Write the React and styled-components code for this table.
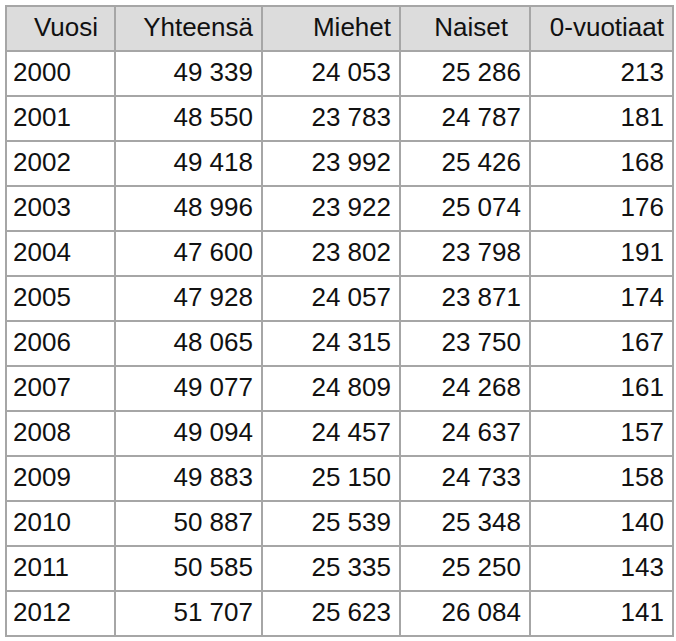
import React from "react";
import styled, { createGlobalStyle } from "styled-components";

const GlobalStyle = createGlobalStyle`
	body {
		margin: 0;
		background: #ffffff;
		font-family: "Liberation Sans", Arial, sans-serif;
	}
`;

const COLUMNS = "109px 147px 138px 130px 143px";

const Page = styled.div`
	padding: 5px 0 0 5px;
`;
const Table = styled.div`
	display: inline-flex;
	flex-direction: column;
	border-left: 2px solid #a6a6a6;
	border-top: 2px solid #a6a6a6;
`;
const Row = styled.div`
	display: grid;
	grid-template-columns: ${COLUMNS};
	background: ${(p) => (p.$head ? "#dcdcdc" : "#ffffff")};
`;
const Cell = styled.div`
	box-sizing: border-box;
	height: 45px;
	display: flex;
	align-items: center;
	justify-content: ${(p) => (p.$left ? "flex-start" : "flex-end")};
	padding: 0 ${(p) => p.$pr ?? 8}px 3px ${(p) => (p.$left ? 6 : 0)}px;
	border-right: 2px solid #a6a6a6;
	border-bottom: 2px solid #a6a6a6;
	font-size: 26px;
	color: #111111;
	white-space: nowrap;
`;

const headers = [
	{ label: "Vuosi", pr: 16 },
	{ label: "Yhteensä", pr: 8 },
	{ label: "Miehet", pr: 8 },
	{ label: "Naiset", pr: 21 },
	{ label: "0-vuotiaat", pr: 8 },
];

const rows = [
	["2000", "49 339", "24 053", "25 286", "213"],
	["2001", "48 550", "23 783", "24 787", "181"],
	["2002", "49 418", "23 992", "25 426", "168"],
	["2003", "48 996", "23 922", "25 074", "176"],
	["2004", "47 600", "23 802", "23 798", "191"],
	["2005", "47 928", "24 057", "23 871", "174"],
	["2006", "48 065", "24 315", "23 750", "167"],
	["2007", "49 077", "24 809", "24 268", "161"],
	["2008", "49 094", "24 457", "24 637", "157"],
	["2009", "49 883", "25 150", "24 733", "158"],
	["2010", "50 887", "25 539", "25 348", "140"],
	["2011", "50 585", "25 335", "25 250", "143"],
	["2012", "51 707", "25 623", "26 084", "141"],
];

const App = () => {
	return (
		<>
			<GlobalStyle />
			<Page>
				<Table>
					<Row $head>
						{headers.map((h) => (
							<Cell key={h.label} $pr={h.pr}>
								{h.label}
							</Cell>
						))}
					</Row>
					{rows.map((r) => (
						<Row key={r[0]}>
							{r.map((v, i) => (
								<Cell key={i} $left={i === 0}>
									{v}
								</Cell>
							))}
						</Row>
					))}
				</Table>
			</Page>
		</>
	);
};

export default App;
